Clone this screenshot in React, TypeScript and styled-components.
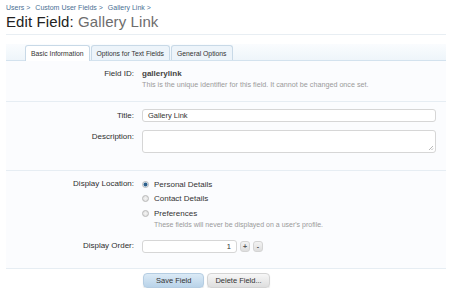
import styled, { createGlobalStyle } from "styled-components";

const Global = createGlobalStyle`
    body {
        margin: 0;
        background: #fff;
        font-family: "Liberation Sans", Arial, sans-serif;
        color: #333;
    }
`

const Page = styled.div`
    padding: 3px 5px 0 6px;
`

const Crumbs = styled.div`
    font-size: 7px;
    line-height: 10px;
    color: #4a6f94;
    height: 10px;
    display: flex;
    gap: 5px;
`

const Crumb = styled.span`
    &::after {
        content: " >";
    }
`

const Heading = styled.h1`
    margin: 0;
    font-size: 15px;
    line-height: 18px;
    font-weight: normal;
    color: #222;
    padding-bottom: 3px;
    border-bottom: 1px solid #e8eef3;
    letter-spacing: 0.1px;
`

const Muted = styled.span`
    color: #6d6d6d;
`

const TabBar = styled.div`
    margin-top: 9px;
    display: flex;
    padding-left: 19px;
    height: 16px;
    background: linear-gradient(to bottom, #fafcfe, #eef5fa);
    border-bottom: 1px solid #d3e2ee;
    align-items: flex-end;
`

const Tab = styled.div<{ $active?: boolean }>`
    font-size: 6.8px;
    display: flex;
    align-items: center;
    padding: 0 5px;
    margin-right: 1px;
    border: 1px solid #c8d9e7;
    border-bottom: none;
    border-radius: 3px 3px 0 0;
    background: ${p => p.$active ? "#fff" : "#edf4fa"};
    color: #333;
    box-sizing: border-box;
    margin-bottom: ${p => p.$active ? "-1px" : "0"};
    height: ${p => p.$active ? "16px" : "15px"};
`

const Form = styled.div`
    background: #fbfcfe;
`

const Section = styled.div<{ $top: number; $bottom: number }>`
    border-bottom: 1px solid #e6edf3;
    display: flex;
    flex-direction: column;
    padding: ${p => p.$top}px 0 ${p => p.$bottom}px;
`

const Row = styled.div<{ $gap?: number }>`
    display: flex;
    align-items: flex-start;
    margin-top: ${p => p.$gap ?? 0}px;
`

const Label = styled.div<{ $pad?: number }>`
    width: 128px;
    text-align: right;
    font-size: 8px;
    line-height: 10px;
    padding-right: 8px;
    padding-top: ${p => p.$pad ?? 0}px;
    flex-shrink: 0;
    color: #2e2e2e;
`

const Value = styled.div`
    flex: 1;
    display: flex;
    flex-direction: column;
    padding-right: 10px;
`

const Strong = styled.div`
    font-size: 8px;
    line-height: 10px;
    font-weight: bold;
    color: #444;
`

const Hint = styled.div`
    font-size: 7.2px;
    line-height: 9px;
    color: #9a9a9a;
    margin-top: 1px;
`

const TextInput = styled.div<{ $h: number }>`
    height: ${p => p.$h}px;
    border: 1px solid #d6d6d6;
    border-radius: 3px;
    background: #fff;
    font-size: 7.5px;
    padding: 0 5px;
    display: flex;
    align-items: center;
    position: relative;
`

const Grip = styled.svg`
    position: absolute;
    right: 1px;
    bottom: 1px;
`

const Radios = styled.div`
    display: flex;
    flex-direction: column;
    gap: 4px;
`

const RadioLine = styled.div`
    display: flex;
    align-items: center;
    gap: 5px;
    height: 10.5px;
    font-size: 8px;
    color: #333;
`

const Dot = styled.span<{ $on?: boolean }>`
    width: 7px;
    height: 7px;
    border-radius: 50%;
    border: 1px solid #b8b8b8;
    background: ${p => p.$on
        ? "radial-gradient(circle, #2d5f8a 0 1.6px, #c9dced 2.2px, #eef3f8 3.5px)"
        : "radial-gradient(circle, #f4f4f4, #dcdcdc)"};
    box-sizing: border-box;
`

const RadioHint = styled(Hint)`
    margin-top: -3px;
    padding-left: 12px;
    font-size: 7px;
`

const Spinner = styled.div`
    display: flex;
    align-items: center;
    gap: 3px;
`

const NumberBox = styled(TextInput)`
    width: 83px;
    justify-content: flex-end;
`

const SpinButton = styled.div`
    width: 10px;
    height: 11px;
    border-radius: 3px;
    background: linear-gradient(to bottom, #f3f3f3, #dedede);
    border: 1px solid #d4d4d4;
    font-size: 7px;
    font-weight: bold;
    display: flex;
    align-items: center;
    justify-content: center;
    color: #555;
    box-sizing: border-box;
`

const Buttons = styled.div`
    display: flex;
    gap: 3px;
    padding: 4px 0 0 137px;
    background: #fff;
`

const Button = styled.div<{ $primary?: boolean }>`
    height: 15px;
    box-sizing: border-box;
    padding: 0 ${p => p.$primary ? "12px" : "7px"};
    border-radius: 4px;
    font-size: 7.5px;
    display: flex;
    align-items: center;
    color: #333;
    border: 1px solid ${p => p.$primary ? "#b5cde2" : "#d4d4d4"};
    background: ${p => p.$primary
        ? "linear-gradient(to bottom, #dbeaf6, #b9d3e9)"
        : "linear-gradient(to bottom, #f7f7f7, #dedede)"};
    box-shadow: 0 1px 1px rgba(0,0,0,0.12);
`

export default function App() {
    return (
        <Page>
            <Global />
            <Crumbs>
                <Crumb>Users</Crumb>
                <Crumb>Custom User Fields</Crumb>
                <Crumb>Gallery Link</Crumb>
            </Crumbs>
            <Heading>Edit Field: <Muted>Gallery Link</Muted></Heading>
            <TabBar>
                <Tab $active>Basic Information</Tab>
                <Tab>Options for Text Fields</Tab>
                <Tab>General Options</Tab>
            </TabBar>
            <Form>
                <Section $top={8} $bottom={12}>
                    <Row>
                        <Label>Field ID:</Label>
                        <Value>
                            <Strong>gallerylink</Strong>
                            <Hint>This is the unique identifier for this field. It cannot be changed once set.</Hint>
                        </Value>
                    </Row>
                </Section>
                <Section $top={7} $bottom={17}>
                    <Row>
                        <Label $pad={1.5}>Title:</Label>
                        <Value>
                            <TextInput $h={11}>Gallery Link</TextInput>
                        </Value>
                    </Row>
                    <Row $gap={8}>
                        <Label $pad={2}>Description:</Label>
                        <Value>
                            <TextInput $h={21}>
                                <Grip width="6" height="6" viewBox="0 0 6 6">
                                    <path d="M5 1 L1 5 M5 3.5 L3.5 5" stroke="#999" strokeWidth="0.7" />
                                </Grip>
                            </TextInput>
                        </Value>
                    </Row>
                </Section>
                <Section $top={8} $bottom={15}>
                    <Row>
                        <Label>Display Location:</Label>
                        <Value>
                            <Radios>
                                <RadioLine><Dot $on />Personal Details</RadioLine>
                                <RadioLine><Dot />Contact Details</RadioLine>
                                <RadioLine><Dot />Preferences</RadioLine>
                                <RadioHint>These fields will never be displayed on a user's profile.</RadioHint>
                            </Radios>
                        </Value>
                    </Row>
                    <Row $gap={11}>
                        <Label $pad={1.5}>Display Order:</Label>
                        <Value>
                            <Spinner>
                                <NumberBox $h={11}>1</NumberBox>
                                <SpinButton>+</SpinButton>
                                <SpinButton>-</SpinButton>
                            </Spinner>
                        </Value>
                    </Row>
                </Section>
                <Buttons>
                    <Button $primary>Save Field</Button>
                    <Button>Delete Field...</Button>
                </Buttons>
            </Form>
        </Page>
    )
}
